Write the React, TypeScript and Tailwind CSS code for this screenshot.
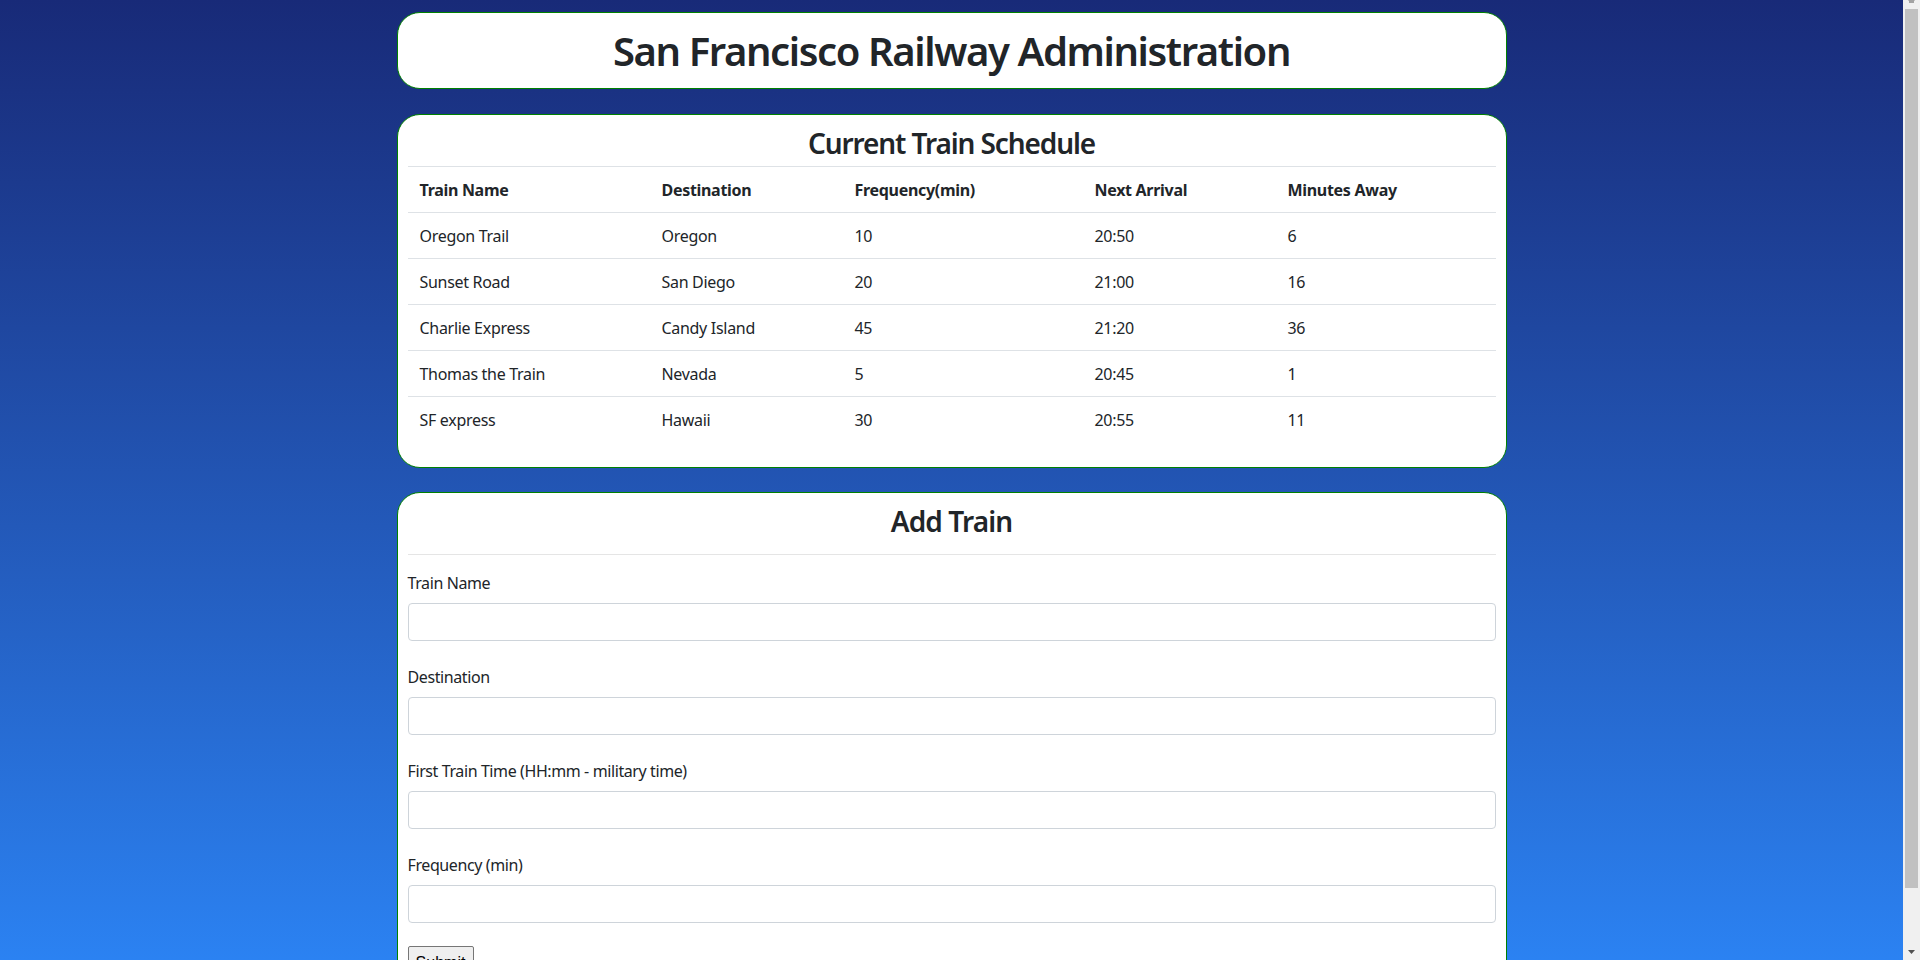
import React from 'react';

const trains = [
  { name: 'Oregon Trail', dest: 'Oregon', freq: '10', next: '20:50', away: '6' },
  { name: 'Sunset Road', dest: 'San Diego', freq: '20', next: '21:00', away: '16' },
  { name: 'Charlie Express', dest: 'Candy Island', freq: '45', next: '21:20', away: '36' },
  { name: 'Thomas the Train', dest: 'Nevada', freq: '5', next: '20:45', away: '1' },
  { name: 'SF express', dest: 'Hawaii', freq: '30', next: '20:55', away: '11' },
];

const fields = [
  'Train Name',
  'Destination',
  'First Train Time (HH:mm - military time)',
  'Frequency (min)',
];

function Scrollbar() {
  return (
    <div className="w-[17px] shrink-0 h-full bg-[#f0f0f0] flex flex-col items-center relative">
      <svg className="absolute top-[-4px] left-[4px]" width="9" height="8" viewBox="0 0 9 8">
        <path d="M4.5 1 L8 5 L1 5 Z" fill="#a3a3a3" />
        <rect x="2" y="5" width="5" height="2" fill="#a3a3a3" />
      </svg>
      <div className="h-[9px] shrink-0" />
      <div className="w-[13px] h-[879px] bg-[#c1c1c1]" />
      <svg className="absolute top-[950px] left-[4px]" width="9" height="6" viewBox="0 0 9 6">
        <path d="M1 0 L8 0 L4.5 4 Z" fill="#505050" />
      </svg>
    </div>
  );
}

export default function App() {
  return (
    <div
      className="flex w-full h-[960px] overflow-hidden text-[#212529]"
      style={{ fontFamily: '"Noto Sans", "Open Sans", sans-serif' }}
    >
      <div className="flex-1 h-full bg-gradient-to-b from-[#182a78] to-[#2b82f2] overflow-hidden">
        <div className="w-[1110px] mx-auto pt-[12px]">
          {/* Title */}
          <div className="h-[77px] bg-white border border-[#008000] rounded-[23px] flex items-center justify-center">
            <h1 className="text-[40px] leading-[48px] font-semibold tracking-[-1.4px]">
              San Francisco Railway Administration
            </h1>
          </div>

          {/* Schedule */}
          <div className="mt-[25px] bg-white border border-[#008000] rounded-[23px] px-[10px] pt-[11px] pb-[24px]">
            <h3 className="text-[28px] leading-[34px] font-semibold text-center tracking-[-1.1px]">
              Current Train Schedule
            </h3>
            <table className="w-full mt-[6px] text-[16px] border-collapse tracking-[-0.3px]">
              <colgroup>
                <col className="w-[242px]" />
                <col className="w-[193px]" />
                <col className="w-[240px]" />
                <col className="w-[193px]" />
                <col className="w-[220px]" />
              </colgroup>
              <thead>
                <tr className="h-[46px] border-t border-[#dee2e6]">
                  <th className="text-left font-bold px-3">Train Name</th>
                  <th className="text-left font-bold px-3">Destination</th>
                  <th className="text-left font-bold px-3">Frequency(min)</th>
                  <th className="text-left font-bold px-3">Next Arrival</th>
                  <th className="text-left font-bold px-3">Minutes Away</th>
                </tr>
              </thead>
              <tbody>
                {trains.map((t) => (
                  <tr key={t.name} className="h-[46px] border-t border-[#dee2e6]">
                    <td className="px-3">{t.name}</td>
                    <td className="px-3">{t.dest}</td>
                    <td className="px-3">{t.freq}</td>
                    <td className="px-3">{t.next}</td>
                    <td className="px-3">{t.away}</td>
                  </tr>
                ))}
              </tbody>
            </table>
          </div>

          {/* Add Train form */}
          <div className="mt-[24px] bg-white border border-[#008000] rounded-t-[23px] px-[10px] pt-[11px] h-[600px]">
            <h3 className="text-[28px] leading-[34px] font-semibold text-center tracking-[-0.9px]">Add Train</h3>
            <div className="mt-[16px] border-t border-[#e5e5e5]" />
            <div className="mt-[16px] flex flex-col gap-[24px] tracking-[-0.4px]">
              {fields.map((f) => (
                <div key={f} className="flex flex-col">
                  <label className="text-[16px] leading-[24px] mb-[8px]">{f}</label>
                  <input
                    type="text"
                    className="h-[38px] w-full border border-[#ced4da] rounded-[4px] px-3 bg-white outline-none"
                  />
                </div>
              ))}
            </div>
            <button
              type="button"
              className="mt-[23px] w-[66px] h-[30px] border border-[#767676] bg-[#efefef] rounded-[2px] text-[16px] leading-[20px] pt-[4px] text-black"
              style={{ fontFamily: '"Liberation Sans", Arial, sans-serif' }}
            >
              Submit
            </button>
          </div>
        </div>
      </div>
      <Scrollbar />
    </div>
  );
}
